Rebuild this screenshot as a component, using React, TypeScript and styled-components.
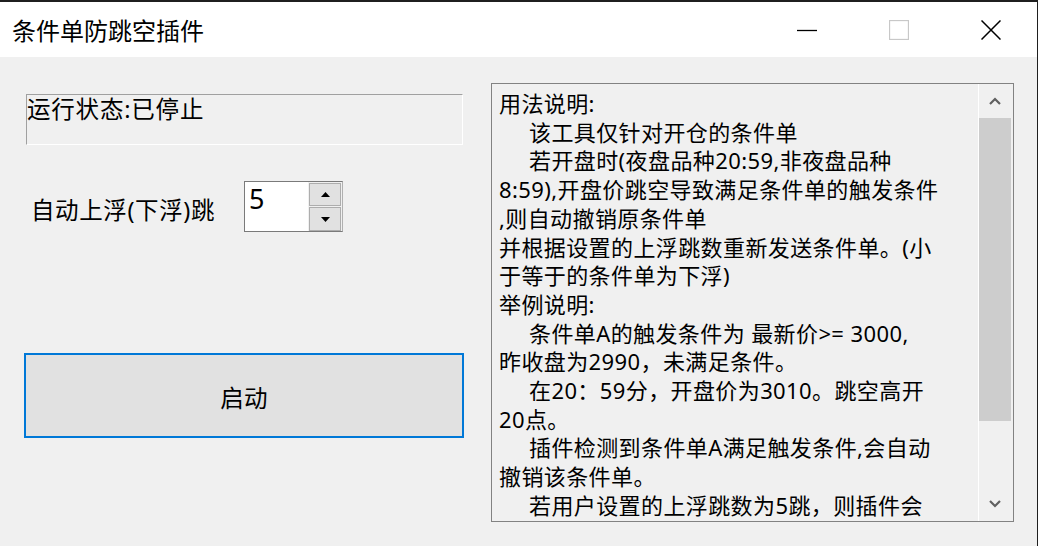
import styled, { createGlobalStyle } from "styled-components";

const GlobalStyle = createGlobalStyle`
  html, body {
    margin: 0;
    padding: 0;
    background: #f0f0f0;
  }
  * {
    box-sizing: border-box;
  }
`;

const FONT = `"Noto Sans", "Noto Sans CJK SC", sans-serif`;

const Window = styled.div`
  width: 1038px;
  height: 546px;
  border-top: 2px solid #1f1f1f;
  border-right: 1px solid #1f1f1f;
  background: #f0f0f0;
  display: flex;
  flex-direction: column;
  font-family: ${FONT};
  color: #000;
  overflow: hidden;
`;

const TitleBar = styled.div`
  height: 55px;
  flex: none;
  background: #fff;
  display: flex;
  align-items: center;
  padding-left: 12px;
`;

const Title = styled.div`
  flex: 1;
  font-size: 24px;
  line-height: 1;
  font-family: "Noto Sans CJK SC", sans-serif;
`;

const CaptionButton = styled.div<{ $disabled?: boolean }>`
  width: 92px;
  height: 55px;
  display: flex;
  align-items: center;
  justify-content: center;
  color: ${(p) => (p.$disabled ? "#c8c8c8" : "#000")};
`;

const Body = styled.div`
  flex: 1;
  display: flex;
  align-items: flex-start;
  padding-left: 24px;
`;

const LeftColumn = styled.div`
  width: 440px;
  display: flex;
  flex-direction: column;
  padding-top: 37px;
  font-size: 23.5px;
  letter-spacing: 0.3px;
`;

const StatusBox = styled.div`
  margin-left: 2px;
  width: 437px;
  height: 51px;
  border-top: 1px solid #a0a0a0;
  border-left: 1px solid #a0a0a0;
  border-bottom: 1px solid #fff;
  border-right: 1px solid #fff;
  line-height: 28px;
  letter-spacing: 0.8px;
`;

const SpinRow = styled.div`
  margin-top: 36px;
  height: 51px;
  display: flex;
  align-items: center;
  padding-left: 7px;
`;

const SpinLabel = styled.div`
  width: 213px;
  line-height: 28px;
  padding-top: 6px;
  letter-spacing: 0.6px;
`;

const SpinBox = styled.div`
  display: flex;
  height: 51px;
  border: 1px solid #7a7a7a;
  border-right: 1px solid #b0b0b0;
`;

const SpinField = styled.div`
  width: 63px;
  background: #fff;
  font-size: 27px;
  line-height: 34px;
  padding-left: 4px;
  letter-spacing: 0;
`;

const SpinButtons = styled.div`
  width: 34px;
  display: flex;
  flex-direction: column;
  gap: 1px;
  padding: 1px 1px 0 1px;
  background: #f0f0f0;
`;

const SpinButton = styled.div<{ $h: number }>`
  height: ${(p) => p.$h}px;
  border: 1px solid #adadad;
  background: #e1e1e1;
  display: flex;
  align-items: center;
  justify-content: center;
`;

const StartButton = styled.div`
  margin-top: 121px;
  width: 440px;
  height: 85px;
  border: 2px solid #0078d7;
  background: #e1e1e1;
  display: flex;
  align-items: center;
  justify-content: center;
  padding-top: 2px;
`;

const Panel = styled.div`
  margin-top: 26px;
  margin-left: 27px;
  width: 523px;
  height: 439px;
  border: 1px solid #828282;
  display: flex;
  overflow: hidden;
`;

const TextArea = styled.div`
  flex: 1;
  padding: 5px 0 0 7px;
  font-size: 22px;
  line-height: 28.7px;
  letter-spacing: 0.4px;
  overflow: hidden;
`;

const Line = styled.div<{ $indent?: boolean }>`
  white-space: nowrap;
  padding-left: ${(p) => (p.$indent ? "30px" : "0")};
`;

const ScrollBar = styled.div`
  width: 35px;
  border-left: 1px solid #fff;
  display: flex;
  flex-direction: column;
  padding-right: 2px;
`;

const ScrollArrow = styled.div`
  height: 34px;
  flex: none;
  display: flex;
  align-items: center;
  justify-content: center;
`;

const ScrollTrack = styled.div`
  flex: 1;
`;

const ScrollThumb = styled.div`
  height: 303px;
  background: #cdcdcd;
`;

const lines: [string, boolean][] = [
  ["用法说明:", false],
  ["该工具仅针对开仓的条件单", true],
  ["若开盘时(夜盘品种20:59,非夜盘品种", true],
  ["8:59),开盘价跳空导致满足条件单的触发条件", false],
  [",则自动撤销原条件单", false],
  ["并根据设置的上浮跳数重新发送条件单。(小", false],
  ["于等于的条件单为下浮)", false],
  ["举例说明:", false],
  ["条件单A的触发条件为 最新价>= 3000,", true],
  ["昨收盘为2990，未满足条件。", false],
  ["在20：59分，开盘价为3010。跳空高开", true],
  ["20点。", false],
  ["插件检测到条件单A满足触发条件,会自动", true],
  ["撤销该条件单。", false],
  ["若用户设置的上浮跳数为5跳，则插件会", true],
];

export default function App() {
  return (
    <>
      <GlobalStyle />
      <Window>
        <TitleBar>
          <Title>条件单防跳空插件</Title>
          <CaptionButton>
            <svg width="20" height="20" viewBox="0 0 20 20">
              <line x1="0" y1="10.5" x2="20" y2="10.5" stroke="#000" strokeWidth="1.3" />
            </svg>
          </CaptionButton>
          <CaptionButton $disabled>
            <svg width="20" height="20" viewBox="0 0 20 20">
              <rect x="0.5" y="0.5" width="19" height="19" fill="none" stroke="#c8c8c8" strokeWidth="1.3" />
            </svg>
          </CaptionButton>
          <CaptionButton>
            <svg width="20" height="20" viewBox="0 0 20 20">
              <path d="M0.5 0.5 L19.5 19.5 M19.5 0.5 L0.5 19.5" stroke="#000" strokeWidth="1.5" />
            </svg>
          </CaptionButton>
        </TitleBar>
        <Body>
          <LeftColumn>
            <StatusBox>运行状态:已停止</StatusBox>
            <SpinRow>
              <SpinLabel>自动上浮(下浮)跳</SpinLabel>
              <SpinBox>
                <SpinField>5</SpinField>
                <SpinButtons>
                  <SpinButton $h={23}>
                    <svg width="9" height="5" viewBox="0 0 9 5">
                      <polygon points="4.5,0 9,5 0,5" fill="#000" />
                    </svg>
                  </SpinButton>
                  <SpinButton $h={24}>
                    <svg width="9" height="5" viewBox="0 0 9 5">
                      <polygon points="0,0 9,0 4.5,5" fill="#000" />
                    </svg>
                  </SpinButton>
                </SpinButtons>
              </SpinBox>
            </SpinRow>
            <StartButton>启动</StartButton>
          </LeftColumn>
          <Panel>
            <TextArea>
              {lines.map(([text, indent], i) => (
                <Line key={i} $indent={indent}>
                  {text}
                </Line>
              ))}
            </TextArea>
            <ScrollBar>
              <ScrollArrow>
                <svg width="12" height="8" viewBox="0 0 12 8">
                  <polyline points="1,7 6,2 11,7" fill="none" stroke="#606060" strokeWidth="2.2" />
                </svg>
              </ScrollArrow>
              <ScrollTrack>
                <ScrollThumb />
              </ScrollTrack>
              <ScrollArrow>
                <svg width="12" height="8" viewBox="0 0 12 8">
                  <polyline points="1,1 6,6 11,1" fill="none" stroke="#606060" strokeWidth="2.2" />
                </svg>
              </ScrollArrow>
            </ScrollBar>
          </Panel>
        </Body>
      </Window>
    </>
  );
}
